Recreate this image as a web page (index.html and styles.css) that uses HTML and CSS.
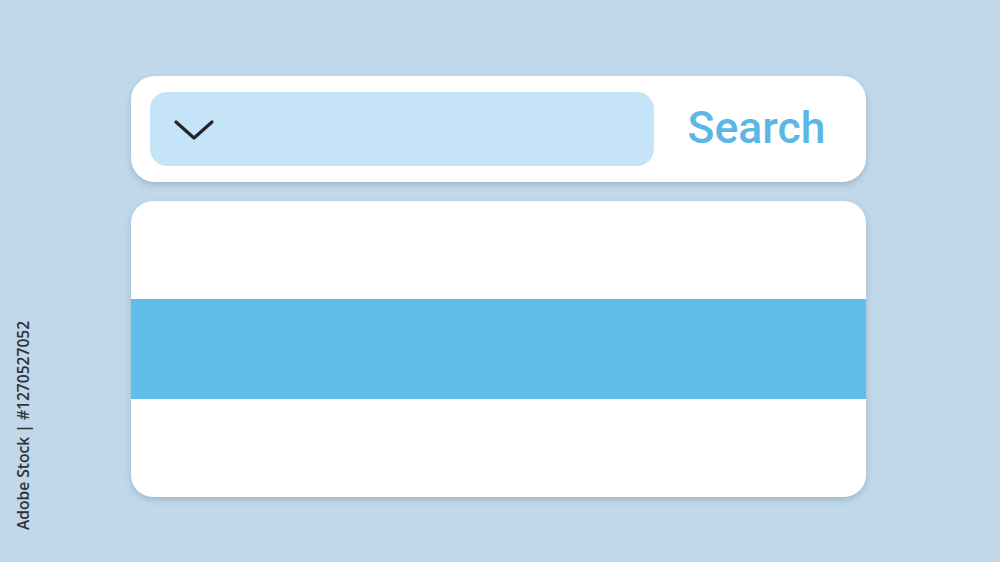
FILE: index.html
```html
<!DOCTYPE html>
<html>
<head>
<meta charset="utf-8">
<link rel="stylesheet" href="styles.css">
</head>
<body>
<div class="stage">
  <div class="search-card">
    <div class="select">
      <svg class="chevron" width="40" height="22" viewBox="0 0 40 22">
        <path d="M2 3 L20 19 L38 3" fill="none" stroke="#22262b" stroke-width="3.2" stroke-linecap="round" stroke-linejoin="round"/>
      </svg>
    </div>
    <div class="search-label">Search</div>
  </div>
  <div class="list-card">
    <div class="row"></div>
    <div class="row active"></div>
    <div class="row"></div>
  </div>
</div>
<div class="credit">Adobe Stock | #1270527052</div>
</body>
</html>
```
FILE: styles.css
```css
html, body {
  margin: 0;
  padding: 0;
}
body {
  width: 1000px;
  height: 562px;
  background: #c0d8ea;
  font-family: Roboto, "Liberation Sans", sans-serif;
  overflow: hidden;
  position: relative;
}
.stage {
  display: flex;
  flex-direction: column;
  gap: 19px;
  padding: 76px 0 0 131px;
  width: 735px;
}
.search-card {
  height: 106px;
  box-sizing: border-box;
  background: #ffffff;
  border-radius: 24px;
  box-shadow: 0 3px 6px rgba(60, 90, 120, 0.25);
  display: flex;
  align-items: center;
  padding: 0 19px;
}
.select {
  width: 504px;
  height: 74px;
  background: #c6e4f7;
  border-radius: 17px;
  display: flex;
  align-items: center;
  padding-left: 24px;
  box-sizing: border-box;
}
.chevron {
  display: block;
  margin-top: 2px;
}
.search-label {
  flex: 1;
  text-align: center;
  font-family: Roboto, "Liberation Sans", sans-serif;
  font-weight: 500;
  font-size: 44.5px;
  color: #5bb7e4;
  padding-left: 12px;
  padding-bottom: 2px;
}
.list-card {
  height: 296px;
  background: #ffffff;
  border-radius: 22px;
  overflow: hidden;
  box-shadow: 0 3px 6px rgba(60, 90, 120, 0.25);
  display: flex;
  flex-direction: column;
}
.row {
  height: 98px;
}
.row.active {
  height: 100px;
  background: #5fbfea;
}
.credit {
  position: absolute;
  left: 13px;
  top: 530px;
  transform-origin: 0 0;
  transform: rotate(-90deg);
  white-space: nowrap;
  font-family: "Open Sans", "DejaVu Sans", sans-serif;
  font-weight: 600;
  font-size: 15.6px;
  line-height: 20px;
  color: #2e3338;
}
```
